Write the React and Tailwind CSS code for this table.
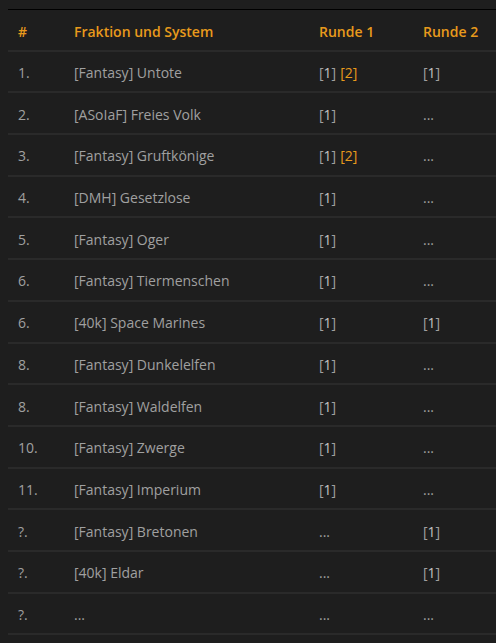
const rows = [
  ['1.', '[Fantasy] Untote', ['1', '2'], ['1']],
  ['2.', '[ASoIaF] Freies Volk', ['1'], null],
  ['3.', '[Fantasy] Gruftkönige', ['1', '2'], null],
  ['4.', '[DMH] Gesetzlose', ['1'], null],
  ['5.', '[Fantasy] Oger', ['1'], null],
  ['6.', '[Fantasy] Tiermenschen', ['1'], null],
  ['6.', '[40k] Space Marines', ['1'], ['1']],
  ['8.', '[Fantasy] Dunkelelfen', ['1'], null],
  ['8.', '[Fantasy] Waldelfen', ['1'], null],
  ['10.', '[Fantasy] Zwerge', ['1'], null],
  ['11.', '[Fantasy] Imperium', ['1'], null],
  ['?.', '[Fantasy] Bretonen', null, ['1']],
  ['?.', '[40k] Eldar', null, ['1']],
  ['?.', '...', null, null],
]

const Links = ({ items }) => {
  if (!items) return <span>...</span>
  return (
    <span className="flex gap-[4px]">
      {items.map((n) => (
        <span key={n} className={n === '2' ? 'text-[#e89a1c]' : ''}>
          [<span className={n === '2' ? '' : 'text-[#c4c4c4]'}>{n}</span>]
        </span>
      ))}
    </span>
  )
}

export default function App() {
  return (
    <div
      className="w-[496px] h-[643px] bg-[#1e1e1e] pt-[9px] pl-[8px] overflow-hidden"
      style={{ fontFamily: '"Open Sans", sans-serif' }}
    >
      <div className="border-t border-black">
        <div className="flex items-center h-[41.7px] pt-[3px] border-b-2 border-[#2a2a2a] text-[14px] font-semibold text-[#e89a1c]">
          <div className="w-[56px] pl-[10px]">#</div>
          <div className="w-[245px] pl-[10px]">Fraktion und System</div>
          <div className="w-[104px] pl-[10px]">Runde 1</div>
          <div className="flex-1 pl-[10px]">Runde 2</div>
        </div>
        {rows.map(([rank, name, r1, r2], i) => (
          <div
            key={i}
            className="flex items-center h-[41.7px] pt-[2px] border-b-2 border-[#2a2a2a] text-[14px] text-[#a0a0a0]"
          >
            <div className="w-[56px] pl-[10px]">{rank}</div>
            <div className="w-[245px] pl-[10px]">{name}</div>
            <div className="w-[104px] pl-[10px]">
              <Links items={r1} />
            </div>
            <div className="flex-1 pl-[10px]">
              <Links items={r2} />
            </div>
          </div>
        ))}
      </div>
    </div>
  )
}
